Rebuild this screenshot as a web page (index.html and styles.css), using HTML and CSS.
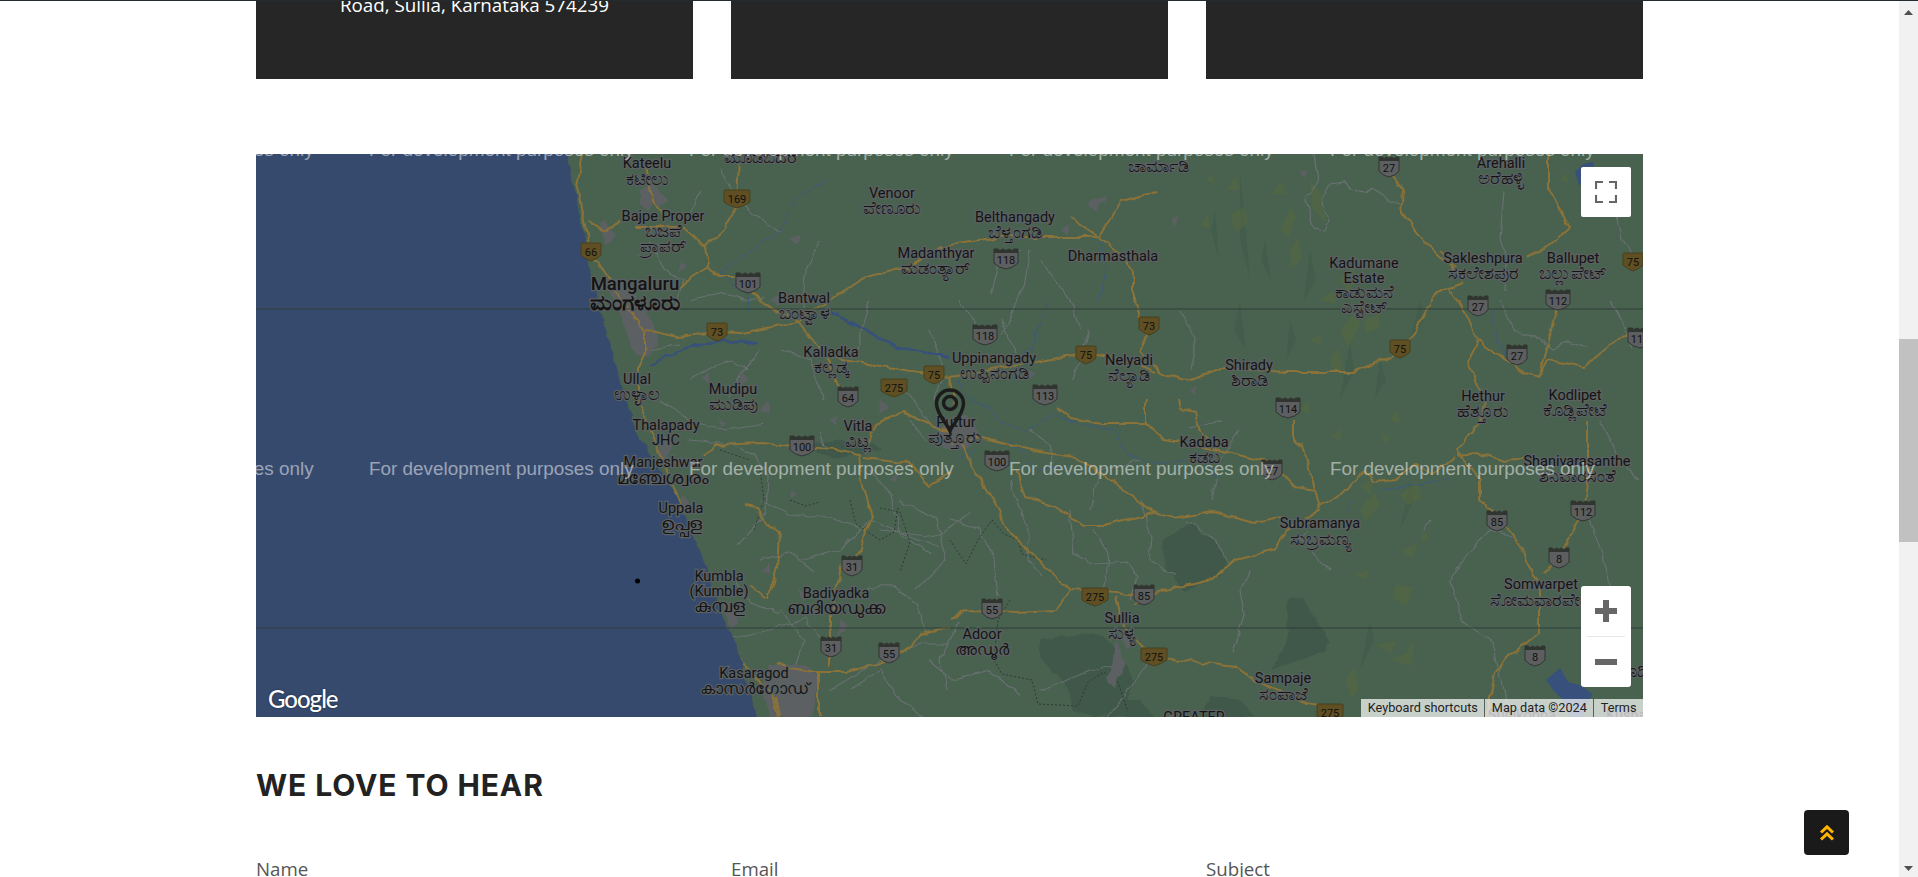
FILE: index.html
```html
<!DOCTYPE html>
<html lang="en">
<head>
<meta charset="utf-8">
<title>Contact</title>
<link rel="stylesheet" href="styles.css">
</head>
<body>
<div class="topline"></div>
<main class="page">
  <section class="cards">
    <div class="card"><p>Road, Sullia, Karnataka 574239</p></div>
    <div class="card"></div>
    <div class="card"></div>
  </section>
  <section class="map">
    <svg class="map-art" viewBox="256 154 1387 563" xmlns="http://www.w3.org/2000/svg">
      <defs>
        <filter id="wob" x="-2%" y="-2%" width="104%" height="104%" color-interpolation-filters="sRGB">
          <feTurbulence type="fractalNoise" baseFrequency=".07" numOctaves="2" seed="4" result="n"/>
          <feDisplacementMap in="SourceGraphic" in2="n" scale="7" xChannelSelector="R" yChannelSelector="G"/>
        </filter>
        <path id="nw" d="M-12-9h24a1 1 0 0 1 1 1v11q-6 4-13 6q-7-2-13-6v-11a1 1 0 0 1 1-1z" fill="#5f4f22" stroke="#46401f"/>
        <path id="nn" d="M-9-9h18a1 1 0 0 1 1 1v11q-4 4-10 6q-6-2-10-6v-11a1 1 0 0 1 1-1z" fill="#5f4f22" stroke="#46401f"/>
        <g id="sw"><path d="M-12-10h4l2 1.500 3-1.500 3 1.500 3-1.500 3 1.500 2-1.500h4v14q-5 5-12 6q-7-1-12-6z" fill="#5c5e60" stroke="#333"/><path d="M-12-10h4l2 1.500 3-1.500 3 1.500 3-1.500 3 1.500 2-1.500h4v4h-24z" fill="#30352f"/></g>
        <g id="sn"><path d="M-10-10h3l2 1.500 3-1.500 2 1.500 2-1.500 3 1.500 2-1.500h3v14q-4 5-10 6q-6-1-10-6z" fill="#5c5e60" stroke="#333"/><path d="M-10-10h3l2 1.500 3-1.500 2 1.500 2-1.500 3 1.500 2-1.500h3v4h-20z" fill="#30352f"/></g>
      </defs>
      <rect class="land" x="256" y="154" width="1387" height="563"/>

      <!-- forest and terrain -->
      <g filter="url(#wob)">
        <path class="forest" d="M1164 540l14-10 14-8 10 12 14 6 12 20-6 16-22 6-14 10-12-14-12-18z"/>
        <path class="forest" d="M1289 600l15-2 12 24 14 20-8 10-30 12-22 6 16-24z"/>
        <path class="forest" d="M1040 640l34-6 30 2 20 24 10 20-10 30-30 6-20-6-10-30-24-20z"/>
        <path class="forest" d="M1110 700l30 0 14 17h-50z"/>
        <path class="forest" d="M1200 717l10-22 30 4 14 18z"/>
        <path class="forest" d="M810 445l30-5 30 2 10 8-40 8-20-3z"/>
      </g>
      <path class="ridge" d="M1240 170l6 60 4 50-10-40zM1215 210l4 50-8-30zM1265 240l6 40-10-20zM1310 250l-6 50 12-20zM1350 340l-10 60 14-30zM1380 360l-6 40 12-20zM1420 300l-10 40 14-20zM1240 300l6 50-12-20zM1290 320l-4 40 10-20zM1410 480l-10 50 14-30zM1370 620l-10 50 14-30z"/>
      <path class="hill" d="M1226 190l10-14 4 14zM1230 215l14-8 4 16-12 10zM1270 195l12-14 4 12zM1200 225l8-10 2 14zM1280 230l10-22 6 8-8 22zM1290 250l8-14 4 22-10 10zM1205 180l8-6 2 10zM1340 280l10-14 6 6-6 26zM1320 300l14-10 2 14zM1340 330l18-22 2 18-12 22zM1310 340l10-6 2 12zM1365 320l14-6 0 14-14 6zM1330 360l8-12 6 22-10 2zM1560 180l6-8 2 12z"/>
      <path class="hill" d="M1360 485l14-6-4 16zM1360 510l14-18 6 12-14 18zM1400 495l18-14 4 18-14 6zM1400 550l18-6-6 14zM1354 575l16-6-4 10zM1395 585l18 2-6 18-14-6zM1390 660l18-8 6-14-2 28zM1345 680l10-12 4 22-8 8zM1375 645l22-4-6 12z"/>
      <path class="hill" d="M1310 180l10 12 6 30-14-14zM1490 470l2-10 4 8zM1380 430l10 8-6 6zM1300 410l8-10 2 14zM1330 435l12-6-2 12zM1390 420l8-10 2 14zM1420 540l6-10 2 12z"/>

      <!-- district boundaries -->
      <g class="bnd" filter="url(#wob)">
        <path d="M1314 154l4 28-12 18 4 18 4 10 10 2 4-8-6-24 8-14 14-2 8 8 12 4 8-6 10 6 6 6 12 4M1504 190l-4 50 8 20-2 30M1590 180l26 30 6 30 12 20M1610 300l14 28 8 20M1500 300l14 30 20 6 18 12 16-6 18 6"/>
        <path d="M720 170l12 20 20 24 28 18M700 190l-10 22M820 240l-14 30 -2 40M1030 250l-6 36 -22 50M1090 330l-18 50M630 330l20 20 30-6M690 440l40 4 24 10 14 20-2 40-28 30M760 500l30 14 40 4 30 10M800 560l40-10 30-30 40 16 30 10M880 530l60 6 30-24M720 640l50-10 34-12 16 20M830 690l50-30 40-16 30 0M700 580l30-6 20 30 30 10"/>
        <path d="M950 520l30 10 14 30 4 36M960 620l-20 40 6 30M1010 480l18 50 0 30 14 16M1094 530l14 24 -2 26 -4 24M1070 510l4 44 20 10 32-2 12 14 -8 24M1140 500l12 38-2 22 26 16M1186 520l30 20 14 26M1250 570l-10 20 4 24-12 40M1040 690l50-20 34-6M1150 660l-30 40-14 17M1306 530l-6 10 30 30M1520 540l-30-10-24 24 -16 28 14 40 28 20 10 40 6 25M1590 520l14 40 6 30M1600 420l20 40 20 20M1430 520l-6 10"/>
        <path d="M1220 420l-30 8M1030 430l20 14 4 20M910 420l16 20M820 430l6 20M1000 320l16 34M1020 250l-20 8-10 36"/>
        <path d="M650 240l14 30 20 10 -8 30M690 300l30-8 24 8 20-2M760 350l-20 24-10 24M780 350l30 10 14 40M690 380l36-20 20 10M660 400l30 20 36 10 40-6M870 300l-12 50M880 380l30 14 20 30M930 330l14 40-10 30M870 470l20 24 10 40 30 20M900 500l36 20 10 40-30 30M760 560l30-8 24 20M860 590l30-6 26 20 10 30M700 640l24-12M780 610l24 30 -10 30M850 690l30-20 20 30 24 17M930 660l20 20 40-10 30 24M1040 260l30 40 10 30M960 300l20 30M1180 310l16 30 -6 30M1240 430l-20 30 -8 40M1140 460l-40 10-10 40"/>
      </g>
      <path class="dash" d="M760 470l4 30 -10 30M850 500l6 24 24 16 14-8 4-24M880 508l20 4 10 30 -10 30M950 540l16 24 12-24 14-20 12 14 14 6 4 14 24 6M1010 600l-12 20 -4 40 8 14 30 6 6 24 40 2 10-24 16-10 14 10 10 30M790 500l16 6 14-4M720 450l30 10"/>

      <!-- water -->
      <g class="river" filter="url(#wob)">
        <path d="M826 180l-31 20-18 33-36 24-22 16"/>
        <path d="M719 273l30 24 2 14"/>
        <path d="M957 380l10 18 20 8 14 14 24 12 28-18 30 10 30 6 16 26 22 8 50-4 16 18"/>
        <path d="M1380 490l50-8 20-4M1490 310l8 32 8 14M1350 500l-4 10"/>
        <path d="M1050 300l-20 50-14 10M1100 240l6 26-8 34"/>
        <path d="M1008 440l30 30 30-2M956 460l20-10"/>
      </g>
      <path class="river-w" filter="url(#wob)" d="M830 312l36 18 31 17 53 10M650 365l30-14 25-8 36-2 16 2"/>
      <path class="lake" d="M1546 680l14-12 8 14 14 4 10 8-10 23h-12l-8-18-8-8zM1575 172l8-8 10-2 2 8-10 6-6 10z"/>

      <!-- urban -->
      <g class="urb" filter="url(#wob)">
        <path d="M606 280l20 4 26 36 6 24-10 12-14 0-14-44-12-24zM945 422l20-8 6 6 8 18-14 12-22-4-4-14zM770 664l36 0 14 14-8 39-42 0-8-28zM640 190l12-4 6 14-10 10-8-8zM660 436l14 4-8 22-8-6zM1090 200l18-4-12 16-8-4zM1122 630l14 12-10 8zM1116 640l-8 40 6 8 12-24z"/>
        <path d="M600 224l6-2 10 16-12 6zM650 180l18 20-10 10zM740 370l10 8-10 8zM880 400l8 8-10 6zM722 600l10 4 6 20-8 6zM840 620l8 8-12 10zM1300 170l8 0-4 8zM1146 322l6 4-6 6zM690 520l8 4-6 14zM682 495l8 6-10 8zM700 380l8-8 2 14zM770 300l8-4 0 10zM680 260l8 6-8 4zM790 240l10-6-2 10zM760 410l6-8 4 12zM830 420l8-4-2 10zM790 490l8 4-8 4zM760 570l8-6 2 10zM800 590l8 2-6 8zM1170 220l8-4-2 10zM1062 230l6-6 2 10zM1030 370l6 4-8 4zM1190 390l6-4 0 10zM720 420l8 2-6 6zM890 480l6-6 2 10z"/>
      </g>

      <!-- roads -->
      <g class="road" filter="url(#wob)">
        <path d="M583 154l-6 33 6 30 8 36 16 24 22 33 16 23v20l-7 14v33l23 57 18 46 22 67 22 53 18 40 31 30 7 34"/>
        <path d="M645 160l7 40 13 20M589 223l18 9 13-12M634 227h49l22 20 3 20 11 10h18l26 26 34 17 29 37 19 43"/>
        <path d="M739 154l-2 53-14 23-18 17M708 267l-16 10-13 13"/>
        <path d="M645 330l34 7 37-5 25 1 56-11 33-22 36-23 31-7 30-12 30-15 22-3 22-3 98 0 23-36 36-10M905 268l37-20"/>
        <path d="M1070 217l23 16 22 17 18 20v30l9 20 4 17-6 13 20 23 27 7 35-12 63 4h67l40-15 22-24 23-40 26-10M1463 280l-40-40-22-27 2-23-11-13M1441 250l22 30"/>
        <path d="M1526 257l18-7 26-23-22-40v-33M1450 290l18 27 9 23 49 33 13 4 9-17 36 7 36-30 23-4M1557 310l-13 50-5 17"/>
        <path d="M1477 340l-9 23 18 37-5 20-24 30 24 30v20l31 33 27 50v50l-31 24-13 16-9 44"/>
        <path d="M1457 455l20-2 27 9 22-5M1588 420v63l-4 30-18 30-7 14-15 16"/>
        <path d="M830 358l63 10 57 9 80-14 54-10 45 7 26 13M950 377l6 30"/>
        <path d="M957 440l9 10 6 17 23 36 15 30 25 24 36 33 44 3 27 4 22-7 49-10 23-20 40-10 11-20 33-20-4-17-13-47-11-6v-20"/>
        <path d="M1320 507l18-10 27-27 9 12 22-2 18-17 18 12 22-18"/>
        <path d="M950 443l31-5 58 14 36 5 36 23 40 32 22 6 40-6 41 11 26-5"/>
        <path d="M1017 470l9 27 27 8 31 20h22l36-8 11-5"/>
        <path d="M1057 407l13 10 32 6h44l18 17 54 10 53 13 23 24 22 3M1146 400v23M1180 400l2 10 14 3 4 20 18 17"/>
        <path d="M1071 590l-16 20-38 2-49-2-18 8M1115 597l9 30 18 20 13 10 41 5 40 5 18 13 53 23 22 4M1142 597l-8 8"/>
        <path d="M705 457l9-12 49-2 27 4 45 3 24 5 3 28 11 34-7 13-4 20-21 17-11 50v50M875 423l27-11 48 21M875 423l-9 30M864 457l47 6 18 24 21-14"/>
        <path d="M745 505l12 2 6 15 16 11-2 34-9 30-18-10"/>
        <path d="M779 662l11 6 25 4 33 0 31-9 32-16 9-14 30-6M819 672v45M775 697l4 20"/>
      </g>

      <!-- seams -->
      <path class="seam" d="M256 309h1387M256 628h1387"/>

      <!-- water, sea -->
      <path class="sea" filter="url(#wob)" d="M240 140H565L574 187 583 230 596 293 612 353 625 400 643 443 674 493 696 543 719 607 737 650 761 730H240z"/>
      <path class="seam" d="M256 309h340M256 628h470"/>
      <circle class="dot" cx="637.500" cy="581" r="2.500"/>

      <!-- shields -->
      <g class="nat">
        <g transform="translate(737 199)"><use href="#nw"/><text y="4">169</text></g>
        <g transform="translate(591 252)"><use href="#nn"/><text y="4">66</text></g>
        <g transform="translate(717 332)"><use href="#nn"/><text y="4">73</text></g>
        <g transform="translate(934 375)"><use href="#nn"/><text y="4">75</text></g>
        <g transform="translate(894 388)"><use href="#nw"/><text y="4">275</text></g>
        <g transform="translate(1149 326)"><use href="#nn"/><text y="4">73</text></g>
        <g transform="translate(1086 355)"><use href="#nn"/><text y="4">75</text></g>
        <g transform="translate(1400 349)"><use href="#nn"/><text y="4">75</text></g>
        <g transform="translate(1633 262)"><use href="#nn"/><text y="4">75</text></g>
        <g transform="translate(1095 597)"><use href="#nw"/><text y="4">275</text></g>
        <g transform="translate(1154 657)"><use href="#nw"/><text y="4">275</text></g>
        <g transform="translate(1330 713)"><use href="#nw"/><text y="4">275</text></g>
      </g>
      <g class="nat">
        <g transform="translate(748 283)"><use href="#sw"/><text y="5">101</text></g>
        <g transform="translate(848 397)"><use href="#sn"/><text y="5">64</text></g>
        <g transform="translate(802 446)"><use href="#sw"/><text y="5">100</text></g>
        <g transform="translate(852 566)"><use href="#sn"/><text y="5">31</text></g>
        <g transform="translate(831 647)"><use href="#sn"/><text y="5">31</text></g>
        <g transform="translate(889 653)"><use href="#sn"/><text y="5">55</text></g>
        <g transform="translate(1389 167)"><use href="#sn"/><text y="5">27</text></g>
        <g transform="translate(1006 259)"><use href="#sw"/><text y="5">118</text></g>
        <g transform="translate(985 335)"><use href="#sw"/><text y="5">118</text></g>
        <g transform="translate(1045 395)"><use href="#sw"/><text y="5">113</text></g>
        <g transform="translate(1478 306)"><use href="#sn"/><text y="5">27</text></g>
        <g transform="translate(1558 300)"><use href="#sw"/><text y="5">112</text></g>
        <g transform="translate(1517 355)"><use href="#sn"/><text y="5">27</text></g>
        <g transform="translate(1288 408)"><use href="#sw"/><text y="5">114</text></g>
        <g transform="translate(997 461)"><use href="#sw"/><text y="5">100</text></g>
        <g transform="translate(1272 470)"><use href="#sn"/><text y="5">27</text></g>
        <g transform="translate(1497 521)"><use href="#sn"/><text y="5">85</text></g>
        <g transform="translate(1583 511)"><use href="#sw"/><text y="5">112</text></g>
        <g transform="translate(1559 558)"><use href="#sn"/><text y="5">8</text></g>
        <g transform="translate(992 609)"><use href="#sn"/><text y="5">55</text></g>
        <g transform="translate(1144 595)"><use href="#sn"/><text y="5">85</text></g>
        <g transform="translate(1535 656)"><use href="#sn"/><text y="5">8</text></g>
        <g transform="translate(1640 338)"><use href="#sw"/><text y="5">112</text></g>
      </g>

      <!-- labels -->
      <g class="lab">
        <text x="647" y="168">Kateelu</text><text class="k" x="647" y="185">ಕಟೀಲು</text>
        <text x="663" y="221">Bajpe Proper</text><text class="k" x="663" y="237">ಬಜಪೆ</text><text class="k" x="663" y="252">ಪ್ರಾಪರ್</text>
        <text class="big" x="635" y="290">Mangaluru</text><text class="kb" x="635" y="310">ಮಂಗಳೂರು</text>
        <text x="892" y="198">Venoor</text><text class="k" x="892" y="214">ವೇಣೂರು</text>
        <text x="936" y="258">Madanthyar</text><text class="k" x="936" y="274">ಮಡಂತ್ಯಾರ್</text>
        <text x="804" y="303">Bantwal</text><text class="k" x="804" y="319">ಬಂಟ್ವಾಳ</text>
        <text x="831" y="357">Kalladka</text><text class="k" x="831" y="373">ಕಲ್ಲಡ್ಕ</text>
        <text x="637" y="384">Ullal</text><text class="k" x="637" y="400">ಉಳ್ಳಾಲ</text>
        <text x="733" y="394">Mudipu</text><text class="k" x="733" y="410">ಮುಡಿಪು</text>
        <text x="1015" y="222">Belthangady</text><text class="k" x="1015" y="238">ಬೆಳ್ತಂಗಡಿ</text>
        <text x="1113" y="261">Dharmasthala</text>
        <text x="1364" y="268">Kadumane</text><text x="1364" y="283">Estate</text><text class="k" x="1364" y="298">ಕಾಡುಮನೆ</text><text class="k" x="1364" y="313">ಎಸ್ಟೇಟ್</text>
        <text x="1483" y="263">Sakleshpura</text><text class="k" x="1483" y="279">ಸಕಲೇಶಪುರ</text>
        <text x="1573" y="263">Ballupet</text><text class="k" x="1573" y="279">ಬಲ್ಲುಪೇಟ್</text>
        <text x="1501" y="168">Arehalli</text><text class="k" x="1501" y="184">ಅರೆಹಳ್ಳಿ</text>
        <text x="994" y="363">Uppinangady</text><text class="k" x="994" y="379">ಉಪ್ಪಿನಂಗಡಿ</text>
        <text x="1129" y="365">Nelyadi</text><text class="k" x="1129" y="381">ನೆಲ್ಯಾಡಿ</text>
        <text x="1249" y="370">Shirady</text><text class="k" x="1249" y="386">ಶಿರಾಡಿ</text>
        <text x="1483" y="401">Hethur</text><text class="k" x="1483" y="417">ಹೆತ್ತೂರು</text>
        <text x="1575" y="400">Kodlipet</text><text class="k" x="1575" y="416">ಕೊಡ್ಲಿಪೇಟೆ</text>
        <text x="956" y="427">Puttur</text><text class="k" x="955" y="443">ಪುತ್ತೂರು</text>
        <text x="858" y="431">Vitla</text><text class="k" x="858" y="447">ವಿಟ್ಲ</text>
        <text x="666" y="430">Thalapady</text><text x="666" y="445">JHC</text>
        <text x="663" y="467">Manjeshwar</text><text class="k" x="663" y="484">മഞ്ചേശ്വരം</text>
        <text x="681" y="513">Uppala</text><text class="k" x="681" y="530">ഉപ്പള</text>
        <text x="719" y="581">Kumbla</text><text x="719" y="596">(Kumble)</text><text class="k" x="719" y="612">കുമ്പള</text>
        <text x="836" y="598">Badiyadka</text><text class="k" x="836" y="614">ബദിയഡുക്ക</text>
        <text x="754" y="678">Kasaragod</text><text class="k2" x="754" y="694">കാസർഗോഡ്</text>
        <text x="982" y="639">Adoor</text><text class="k2" x="982" y="655">അഡൂർ</text>
        <text x="1122" y="623">Sullia</text><text class="k" x="1122" y="639">ಸುಳ್ಯ</text>
        <text x="1204" y="447">Kadaba</text><text class="k" x="1204" y="463">ಕಡಬ</text>
        <text x="1320" y="528">Subramanya</text><text class="k" x="1320" y="545">ಸುಬ್ರಮಣ್ಯ</text>
        <text x="1577" y="466">Shanivarasanthe</text><text class="k" x="1577" y="482">ಶನಿವಾರಸಂತೆ</text>
        <text x="1541" y="589">Somwarpet</text><text class="k" x="1541" y="606">ಸೋಮವಾರಪೇಟೆ</text>
        <text x="1283" y="683">Sampaje</text><text class="k" x="1283" y="700">ಸಂಪಾಜೆ</text>
        <text class="k" x="1158" y="172">ಚಾರ್ಮಾಡಿ</text>
        <text class="k" x="761" y="163">ಮೂಡಬಿದರೆ</text>
        <text x="1194" y="722">GREATER</text>
        <text class="k" x="1632" y="677">ಕೊಡಿ</text>
        <text x="1522" y="720">Sunikoppa</text>
        <text x="1628" y="720">Kushal</text>
      </g>

      <!-- watermarks -->
      <g class="wm">
        <text x="49" y="475">For development purposes only</text>
        <text x="369" y="475">For development purposes only</text>
        <text x="689" y="475">For development purposes only</text>
        <text x="1009" y="475">For development purposes only</text>
        <text x="1330" y="475">For development purposes only</text>
        <text x="49" y="156">For development purposes only</text>
        <text x="369" y="156">For development purposes only</text>
        <text x="689" y="156">For development purposes only</text>
        <text x="1009" y="156">For development purposes only</text>
        <text x="1330" y="156">For development purposes only</text>
      </g>

      <!-- marker -->
      <g class="pin">
        <path d="M950 431C946 422 936.500 414 936.500 403.500A13.500 13.500 0 1 1 963.500 403.500C963.500 414 954 422 950 431Z"/>
        <circle cx="950" cy="403" r="6.500"/>
      </g>
    </svg>

    <span class="google">Google</span>

    <button class="map-btn full" aria-label="Toggle fullscreen">
      <svg width="22" height="22" viewBox="0 0 22 22"><path d="M1 8V1h7M14 1h7v7M21 14v7h-7M8 21H1v-7" fill="none" stroke="#666" stroke-width="2.200"/></svg>
    </button>

    <div class="zoom">
      <button class="zoom-btn" aria-label="Zoom in">
        <svg width="22" height="22" viewBox="0 0 22 22"><path d="M8 0h6v8h8v6h-8v8H8v-8H0V8h8z" fill="#666"/></svg>
      </button>
      <div class="zoom-sep"></div>
      <button class="zoom-btn" aria-label="Zoom out">
        <svg width="22" height="6" viewBox="0 0 22 6"><path d="M0 0h22v6H0z" fill="#666"/></svg>
      </button>
    </div>

    <div class="attrib">
      <span>Keyboard shortcuts</span>
      <span>Map data ©2024</span>
      <span>Terms</span>
    </div>
  </section>

  <h2 class="title">WE LOVE TO HEAR</h2>

  <form class="fields">
    <label>Name</label>
    <label>Email</label>
    <label>Subject</label>
  </form>
</main>

<a class="to-top" href="#" aria-label="Back to top">
  <svg width="14" height="16" viewBox="0 0 14 16"><path d="M1 7.500 7 1.800l6 5.700M1 14.500 7 8.800l6 5.700" fill="none" stroke="#ffb400" stroke-width="3"/></svg>
</a>

<aside class="scrollbar">
  <svg class="arrow-up" width="9" height="5" viewBox="0 0 9 5"><path d="M4.500 0 9 5H0z" fill="#505050"/></svg>
  <div class="thumb"></div>
  <svg class="arrow-down" width="9" height="5" viewBox="0 0 9 5"><path d="M0 0h9L4.500 5z" fill="#505050"/></svg>
</aside>
</body>
</html>
```

FILE: styles.css
```css
* { box-sizing: border-box; }
html, body { height: 100%; }
body {
  margin: 0;
  background: #fff;
  overflow: hidden;
  font-family: "Open Sans", "Liberation Sans", sans-serif;
  color: #555;
}
.topline {
  position: fixed;
  top: 0; left: 0; right: 0;
  height: 1px;
  background: #232a30;
  z-index: 5;
}
.page {
  width: 1387px;
  margin-left: 256px;
  margin-top: -60px;
}
.cards {
  display: grid;
  grid-template-columns: repeat(3, 437px);
  gap: 38px;
}
.card {
  height: 139px;
  background: #262626;
  padding-top: 52px;
  text-align: center;
}
.card p {
  margin: 0;
  color: #fff;
  font-size: 18.800px;
  line-height: 26px;
}
.map {
  position: relative;
  margin-top: 75px;
  height: 563px;
  overflow: hidden;
}
.map-art { display: block; width: 1387px; height: 563px; }
.land { fill: #48624f; }
.sea { fill: #364a6e; }
.forest { fill: #3f5849; }
.ridge { fill: #3f584a; opacity: .45; }
.hill { fill: #55683f; opacity: .6; }
.bnd path { fill: none; stroke: #687070; stroke-width: 1.200; }
.dash { fill: none; stroke: #2e3a33; stroke-width: 1; stroke-dasharray: 2 2; }
.river path { fill: none; stroke: #3d5a7c; stroke-width: 1; }
.river-w { fill: none; stroke: #37507c; stroke-width: 2.400; }
.lake { fill: #37507c; }
.urb path { fill: #5c6063; }
.road path { fill: none; stroke: #8a7238; stroke-width: 2; stroke-linejoin: round; }
.seam { fill: none; stroke: #2f3d3b; stroke-width: 1; }
.dot { fill: #000; }
.nat text {
  font: 11px Roboto, "Liberation Sans", sans-serif;
  fill: #111;
  text-anchor: middle;
}
.lab text {
  font: 14.500px Roboto, "Noto Sans", "Liberation Sans", sans-serif;
  fill: #141414;
  stroke: #5b6062;
  stroke-width: 2.500;
  paint-order: stroke;
  text-anchor: middle;
}
.lab .k { font-size: 18px; }
.lab .k2 { font-size: 16px; }
.lab .big { font-size: 18.500px; font-weight: 500; }
.lab .kb { font-size: 23px; font-weight: 700; }
.wm text {
  font: 18.900px "Liberation Sans", Arial, sans-serif;
  fill: rgba(255, 255, 255, .5);
}
.pin { fill: none; stroke: #1c1c1c; stroke-width: 3.500; }
.google {
  position: absolute;
  left: 12px;
  bottom: 4px;
  color: #fff;
  font: 500 24px/28px Lato, "Open Sans", sans-serif;
  letter-spacing: -1px;
  text-shadow: 0 0 2px rgba(0, 0, 0, .6);
}
.map-btn, .zoom-btn {
  display: flex;
  align-items: center;
  justify-content: center;
  border: 0;
  padding: 0;
  background: #fff;
}
.full {
  position: absolute;
  top: 13px;
  right: 12px;
  width: 50px;
  height: 50px;
  border-radius: 2px;
}
.zoom {
  position: absolute;
  top: 432px;
  right: 12px;
  width: 50px;
  height: 101px;
  display: flex;
  flex-direction: column;
  background: #fff;
  border-radius: 3px;
}
.zoom-btn { width: 50px; height: 50px; background: transparent; }
.zoom-sep { height: 1px; margin: 0 6px; background: #e6e6e6; }
.attrib {
  position: absolute;
  right: 0;
  bottom: 0;
  height: 18px;
  display: flex;
  background: rgba(255, 255, 255, .7);
  font: 12.700px/18px Roboto, "Liberation Sans", sans-serif;
  color: #222;
}
.attrib span { padding: 0 6.500px; }
.attrib span + span { border-left: 1px solid #55605a; }
.title {
  margin: 48px 0 0;
  font: 700 30px/40px Inter, "Open Sans", sans-serif;
  color: #222;
  letter-spacing: .9px;
}
.fields {
  display: grid;
  grid-template-columns: repeat(3, 437px);
  gap: 38px;
  margin-top: 50px;
}
.fields label { font-size: 18.700px; line-height: 28px; color: #555; }
.to-top {
  position: fixed;
  left: 1804px;
  top: 810px;
  width: 45px;
  height: 45px;
  display: flex;
  align-items: center;
  justify-content: center;
  background: #1a1a1a;
  border-radius: 4px;
}
.scrollbar {
  position: fixed;
  top: 0; right: 0; bottom: 0;
  width: 19px;
  background: #f1f1f1;
  display: flex;
  flex-direction: column;
  align-items: center;
}
.arrow-up { margin-top: 10px; flex: none; }
.thumb {
  flex: none;
  width: 19px;
  height: 203px;
  margin-top: 324px;
  background: #c1c1c1;
}
.arrow-down { margin-top: auto; margin-bottom: 6px; flex: none; }
```
